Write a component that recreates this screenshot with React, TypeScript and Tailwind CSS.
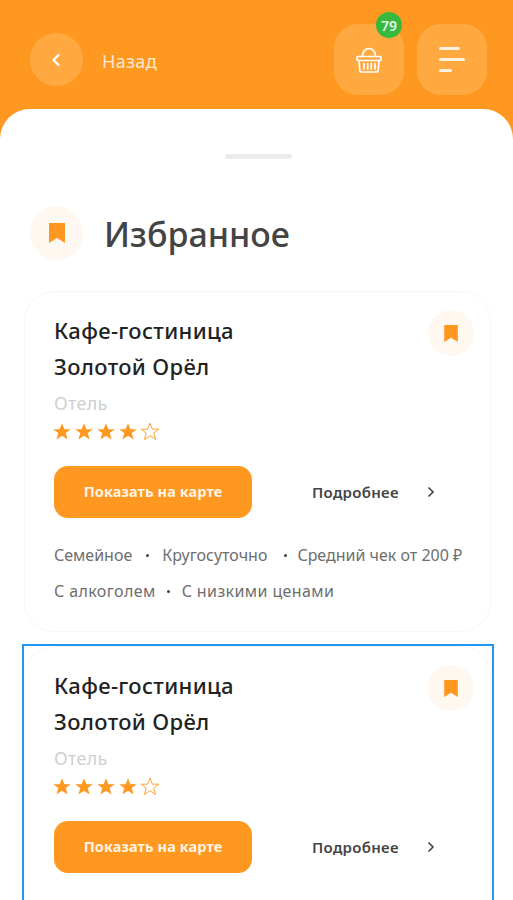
const font = "font-['Noto_Sans',sans-serif]";

function Bookmark({ className }: { className: string }) {
  return (
    <svg viewBox="0 0 16 20" className={className} fill="#ff9820">
      <path d="M0 0h16v20l-8-5L0 20z" />
    </svg>
  );
}

function Star({ filled }: { filled: boolean }) {
  return (
    <svg viewBox="0 0 20 20" className="h-[20px] w-[20px]">
      <path
        d="M10 1.2l2.4 6h6.4l-5.1 3.9 1.9 6.4L10 13.7l-5.6 3.8 1.9-6.4L1.2 7.2h6.4z"
        fill={filled ? "#ff9820" : "none"}
        stroke="#ff9820"
        strokeWidth={filled ? 0 : 0.9}
      />
    </svg>
  );
}

function Dot({ className }: { className: string }) {
  return <span className={`h-[3px] w-[3px] rounded-full bg-[#444] ${className}`} />;
}

// the second card runs off the bottom of the screen, so its tags are not shown
function Card({ showTags = true }: { showTags?: boolean }) {
  return (
    <div className="min-h-[341px] rounded-[30px] border border-[#f7f7f7] bg-white pb-[22px] pl-[29px] pr-[16px] pt-[18px]">
      <div className="flex justify-between">
        <div className="pt-[2px]">
          <p className="text-[22px] font-medium leading-[36px] tracking-[0.35px] text-[#222]">Кафе-гостиница</p>
          <p className="text-[22px] font-medium leading-[36px] tracking-[0.35px] text-[#222]">Золотой Орёл</p>
          <p className="mt-px text-[18px] leading-[36px] tracking-[0.3px] text-[#cfcfcf]">Отель</p>
        </div>
        <div className="flex h-[46px] w-[46px] items-center justify-center rounded-full bg-[#fff8f0]">
          <Bookmark className="h-[17px] w-[14px]" />
        </div>
      </div>
      <div className="-ml-[2px] flex h-[22px] items-center gap-[2px]">
        {[true, true, true, true, false].map((filled, i) => (
          <Star key={i} filled={filled} />
        ))}
      </div>
      <div className="mt-[23px] flex items-center">
        <button className="h-[52px] w-[198px] rounded-[14px] bg-[#ff9820] text-[14.5px] font-bold tracking-[0.1px] text-[#fff3e3]">
          Показать на карте
        </button>
        <span className="ml-[60px] text-[15px] font-semibold tracking-[0.3px] text-[#444]">Подробнее</span>
        <svg viewBox="0 0 10 14" className="ml-[27px] h-[14px] w-[10px]" fill="none" stroke="#444" strokeWidth="1.6">
          <path d="M2.5 2.5L7 7l-4.5 4.5" />
        </svg>
      </div>
      {showTags && (
        <div className="mt-[19px] text-[16px] leading-[36px] text-[#6e6e6e]">
          <div className="flex items-center whitespace-nowrap">
            <span>Семейное</span>
            <Dot className="ml-[14px] mr-[13px]" />
            <span>Кругосуточно</span>
            <Dot className="ml-[17px] mr-[10px]" />
            <span>Средний чек от 200 ₽</span>
          </div>
          <div className="flex items-center whitespace-nowrap tracking-[0.4px]">
            <span>С алкоголем</span>
            <Dot className="ml-[11px] mr-[12px]" />
            <span>С низкими ценами</span>
          </div>
        </div>
      )}
    </div>
  );
}

export default function App() {
  return (
    <div className={`h-[900px] w-[513px] overflow-hidden bg-[#ff9820] ${font}`}>
      <header className="flex h-[109px] items-start px-[26px] pt-[24px]">
        <div className="flex h-[71px] flex-1 items-center pl-[4px]">
          <button className="flex h-[53px] w-[53px] items-center justify-center rounded-full bg-[#ffa940]">
            <svg viewBox="0 0 12 16" className="-ml-[2px] h-[16px] w-[12px]" fill="none" stroke="white" strokeWidth="2.2" strokeLinecap="round" strokeLinejoin="round">
              <path d="M8.5 3L3.5 8l5 5" />
            </svg>
          </button>
          <span className="ml-[19px] mt-[3px] text-[18px] tracking-[0.4px] text-[#ffe9cf]">Назад</span>
        </div>
        <div className="flex gap-[13px]">
          <button className="relative flex h-[71px] w-[70px] items-center justify-center rounded-[24px] bg-[#ffa940]">
            <svg viewBox="0 0 26 28" className="h-[28px] w-[26px]" fill="none" stroke="white" strokeWidth="1.7" strokeLinecap="round" strokeLinejoin="round">
              <path d="M6.5 10.5C6.5 5.5 9.5 2.5 13 2.5s6.5 3 6.5 8" />
              <path d="M2 10.5h22a1 1 0 0 1 1 1v2a1 1 0 0 1-1 1H2a1 1 0 0 1-1-1v-2a1 1 0 0 1 1-1z" />
              <path d="M3 14.5l.8 9.5a2 2 0 0 0 2 2h14.4a2 2 0 0 0 2-2l.8-9.5" />
              <path d="M8 17.5v5.5M11.7 17.5v5.5M15.3 17.5v5.5M19 17.5v5.5" />
            </svg>
            <span className="absolute -top-[12px] left-[42px] flex h-[26px] w-[26px] items-center justify-center rounded-full bg-[#37b83f] text-[14px] font-semibold text-[#e6f7e6]">
              79
            </span>
          </button>
          <button className="flex h-[71px] w-[70px] flex-col items-start justify-center gap-[8.5px] rounded-[24px] bg-[#ffa940] pl-[22px]">
            <span className="h-[2.5px] w-[21px] rounded-full bg-[#fff1df]" />
            <span className="h-[2.5px] w-[26px] rounded-full bg-[#fff1df]" />
            <span className="h-[2.5px] w-[13px] rounded-full bg-[#fff1df]" />
          </button>
        </div>
      </header>
      <main className="h-[791px] rounded-t-[30px] bg-white">
        <div className="ml-[225px] pt-[45px]">
          <div className="h-[5px] w-[67px] rounded-full bg-[#ebebeb]" />
        </div>
        <div className="ml-[30px] mt-[47px] flex items-center">
          <div className="flex h-[54px] w-[53px] items-center justify-center rounded-full bg-[#fff8f0]">
            <Bookmark className="h-[20px] w-[16px]" />
          </div>
          <h1 className="ml-[21px] mt-[3px] text-[34px] font-medium text-[#444]">Избранное</h1>
        </div>
        <div className="mx-[24px] mt-[31px] w-[467px]">
          <Card />
        </div>
        <div className="ml-[22px] mt-[12px] w-[472px] border-2 border-[#2196f3] pr-px">
          <Card showTags={false} />
        </div>
      </main>
    </div>
  );
}
